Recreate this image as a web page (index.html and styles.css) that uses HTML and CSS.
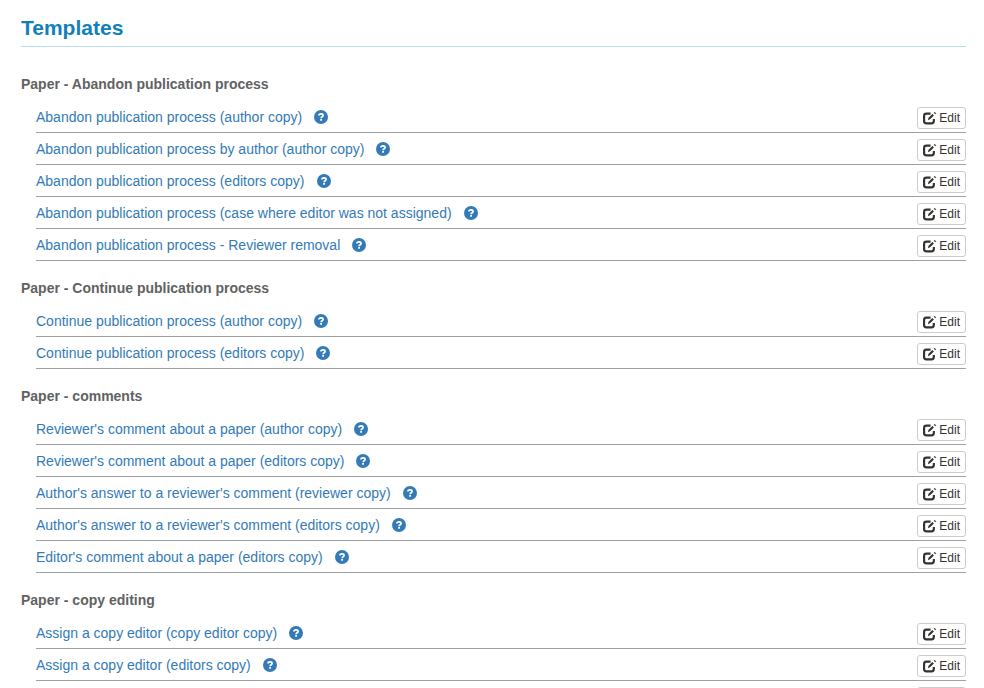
FILE: index.html
```html
<!DOCTYPE html>
<html lang="en">
<head>
<meta charset="utf-8">
<title>Templates</title>
<link rel="stylesheet" href="styles.css">
<script src="app.js" defer></script>
</head>
<body>
<svg class="sprite" aria-hidden="true">
<symbol id="help" viewBox="0 0 14 14"><circle cx="7" cy="7" r="7" fill="currentColor"/><path d="M4.900 5.600C4.900 4.300 5.700 3.900 7 3.900S9.100 4.400 9.100 5.500C9.100 6.800 7.100 6.700 7.100 8.200" fill="none" stroke="#fff" stroke-width="1.700"/><path d="M6.200 9h1.800v1.700H6.200z" fill="#fff"/></symbol>
<symbol id="edit" viewBox="0 0 12 12"><path d="M7 1.500H3.200Q1 1.500 1 3.700V8.300Q1 10.500 3.200 10.500H7.800Q10 10.500 10 8.300V6.500" fill="none" stroke="currentColor" stroke-width="2"/><path d="M4.500 7.600l.6-2.200L8.700 1.800l1.400 1.400L6.500 6.800zM9.900.8l.6-.6q.3-.3.600 0l.700.700q.3.300 0 .6l-.6.600z" fill="currentColor"/></symbol>
</svg>
<main class="page">
<h1 class="title">Templates</h1>
<div id="groups"></div>
</main>
</body>
</html>
```
FILE: styles.css
```css
* { box-sizing: border-box; }
body { margin: 0; font: 14px/20px "Liberation Sans", Arial, sans-serif; color: #333; }
.sprite { display: none; }
.page { padding: 16px 18px 0 21px; }
.title { margin: 0 0 27px; padding-bottom: 6px; border-bottom: 1px solid #b5dff0; color: #1280b9; font-size: 21px; line-height: 24px; }
.group { margin-bottom: 17px; }
.group-title { margin: 0 0 7px; color: #626262; font-size: 14px; line-height: 20px; }
.list { margin: 0; padding: 0 0 0 15px; list-style: none; }
.row { display: flex; align-items: center; height: 32px; border-bottom: 1px solid #a0a0a0; }
.link { color: #337ab7; text-decoration: none; }
.help { display: flex; margin-left: 12px; padding: 0; border: 0; background: none; color: #337ab7; }
.help svg { width: 14px; height: 14px; }
.edit { display: flex; align-items: center; align-self: flex-end; gap: 3px; height: 22px; margin: 0 0 3px auto; padding: 0 5px; border: 1px solid #ccc; border-radius: 3px; background: #fff; color: #333; font: 12px/18px "Liberation Sans", Arial, sans-serif; }
.edit svg { width: 13px; height: 13px; }
```
FILE: app.js
```js
const groups = [
  ["Paper - Abandon publication process", [
    "Abandon publication process (author copy)",
    "Abandon publication process by author (author copy)",
    "Abandon publication process (editors copy)",
    "Abandon publication process (case where editor was not assigned)",
    "Abandon publication process - Reviewer removal"]],
  ["Paper - Continue publication process", [
    "Continue publication process (author copy)",
    "Continue publication process (editors copy)"]],
  ["Paper - comments", [
    "Reviewer's comment about a paper (author copy)",
    "Reviewer's comment about a paper (editors copy)",
    "Author's answer to a reviewer's comment (reviewer copy)",
    "Author's answer to a reviewer's comment (editors copy)",
    "Editor's comment about a paper (editors copy)"]],
  ["Paper - copy editing", [
    "Assign a copy editor (copy editor copy)",
    "Assign a copy editor (editors copy)",
    ""]]
];
const label = item => item && `<a class="link" href="#">${item}</a><button class="help" aria-label="Help"><svg><use href="#help"/></svg></button>`;
document.getElementById("groups").innerHTML = groups.map(([title, items]) => `
<section class="group"><h2 class="group-title">${title}</h2><ul class="list">
${items.map(item => `<li class="row">${label(item)}<button class="edit"><svg aria-hidden="true"><use href="#edit"/></svg>Edit</button></li>`).join("")}
</ul></section>`).join("");
```
